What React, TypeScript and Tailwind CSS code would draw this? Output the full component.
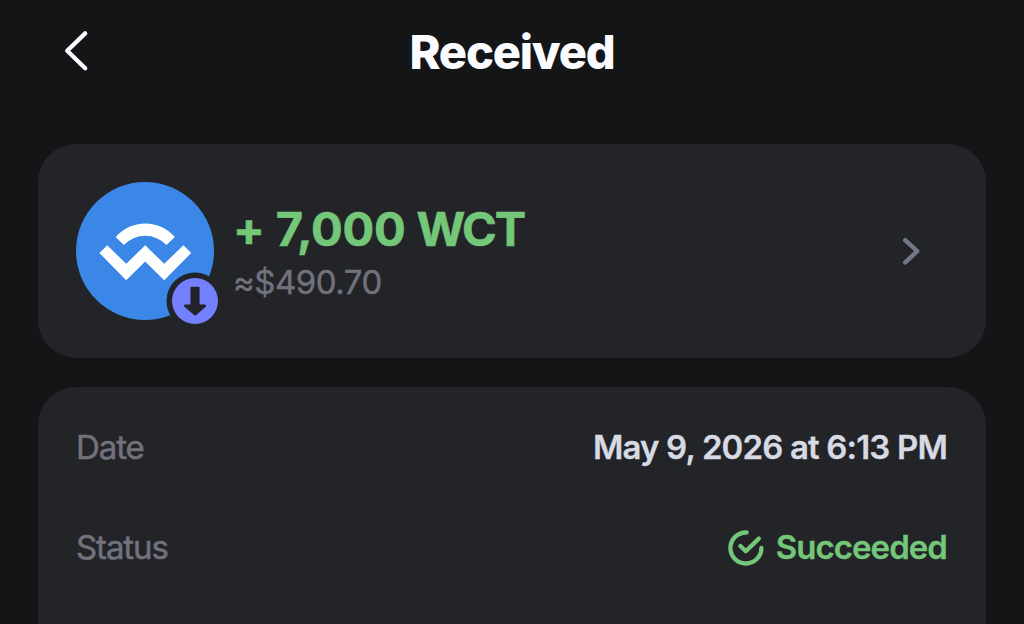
import React from "react";

const BackIcon: React.FC = () => (
  <svg width="40" height="48" viewBox="0 0 40 48" fill="none">
    <path
      d="M29.2 7.4 11.2 24.7 29.2 42.2"
      stroke="#fbfcff"
      strokeWidth="4.3"
      strokeLinecap="round"
      strokeLinejoin="round"
    />
  </svg>
);

const ChevronIcon: React.FC = () => (
  <svg width="20" height="30" viewBox="0 0 20 30" fill="none">
    <path
      d="M4.2 4.2 16.2 15.2 4.2 26.4"
      stroke="#72788a"
      strokeWidth="4.4"
      strokeLinecap="round"
      strokeLinejoin="round"
    />
  </svg>
);

const TokenLogo: React.FC = () => (
  <svg width="138" height="138" viewBox="0 0 138 138">
    <circle cx="69" cy="69" r="69" fill="#3b87e8" />
    <g fill="#fff">
      <path d="M39.7 55A39 39 0 0 1 98.8 55L90.5 63A29.5 29.5 0 0 0 47.8 63Z" />
      <path d="M23.4 71 31.2 63.3 50.2 81.8 69.2 63.3 88.2 81.8 107.4 63.3 115.2 71 88.2 98.2 69.2 79.5 50.2 98.2Z" />
    </g>
  </svg>
);

const ReceiveBadge: React.FC = () => (
  <svg width="58" height="58" viewBox="0 0 58 58">
    <circle cx="29" cy="29" r="28.5" fill="#232428" />
    <circle cx="29" cy="29" r="23" fill="#7480ff" />
    <path
      d="M25.4 14.8H32.6Q33.6 14.8 33.6 15.8V32.5H38.8Q41 33.2 39.4 35L30.3 43Q29.2 43.9 28.1 43L18.7 35Q17 33.2 19.2 32.5H24.4V15.8Q24.4 14.8 25.4 14.8Z"
      fill="#232428"
    />
  </svg>
);

const SuccessIcon: React.FC = () => (
  <svg width="36" height="36" viewBox="0 0 36 36" fill="none">
    <g
      stroke="#74c678"
      strokeWidth="4.3"
      strokeLinecap="round"
      strokeLinejoin="round"
    >
      <path d="M18.6 2.5A15.5 15.5 0 1 0 33.4 18" />
      <path d="M12.4 16 17.8 21.2 30.8 8.6" />
    </g>
  </svg>
);

const Row: React.FC<{ label: string; children: React.ReactNode }> = ({
  label,
  children
}) => (
  <div className="flex h-[100px] items-center justify-between">
    <span className="text-[33px] tracking-[-1.1px] text-[#72727e] [-webkit-text-stroke:0.5px_#72727e]">
      {label}
    </span>
    {children}
  </div>
);

const App: React.FC = () => {
  return (
    <div className="h-[624px] w-[1024px] overflow-hidden bg-[#141517] font-['Inter',sans-serif]">
      <header className="grid h-[104px] grid-cols-[1fr_auto_1fr] items-center px-14">
        <button type="button" aria-label="Back" className="w-10 -mt-1">
          <BackIcon />
        </button>
        <h1 className="-mt-0.5 text-[47px] font-extrabold leading-none tracking-[-1.2px] text-[#fbfcff]">
          Received
        </h1>
      </header>

      <main className="mt-10 flex flex-col gap-[29px] px-[38px]">
        <section className="flex h-[214px] items-center rounded-[38px] bg-[#232428] pr-[65px] pl-[38px]">
          <div className="relative shrink-0">
            <TokenLogo />
            <div className="absolute left-[90px] top-[90px]">
              <ReceiveBadge />
            </div>
          </div>
          <div className="mt-1.5 ml-[19px] flex grow flex-col">
            <span className="text-[47px] font-bold leading-[56px] tracking-[-0.2px] text-[#74c678] [-webkit-text-stroke:0.6px_#74c678]">
              + 7,000 <span className="tracking-[-2px]">WCT</span>
            </span>
            <span className="text-[33px] leading-[51px] tracking-[-0.5px] text-[#72727e] [-webkit-text-stroke:0.4px_#72727e]">
              ≈$490.70
            </span>
          </div>
          <ChevronIcon />
        </section>

        <section className="h-[260px] rounded-t-[38px] bg-[#232428] px-[38px] pt-[11px]">
          <Row label="Date">
            <span className="mr-px text-[33px] font-semibold tracking-[-0.85px] text-[#d7dae3] [-webkit-text-stroke:0.3px_#d7dae3]">
              May 9, 2026 at 6:13 PM
            </span>
          </Row>
          <Row label="Status">
            <span className="mr-px flex items-center gap-3 text-[33px] font-semibold tracking-[-0.95px] text-[#74c678] [-webkit-text-stroke:0.3px_#74c678]">
              <SuccessIcon />
              Succeeded
            </span>
          </Row>
        </section>
      </main>
    </div>
  );
};

export default App;
